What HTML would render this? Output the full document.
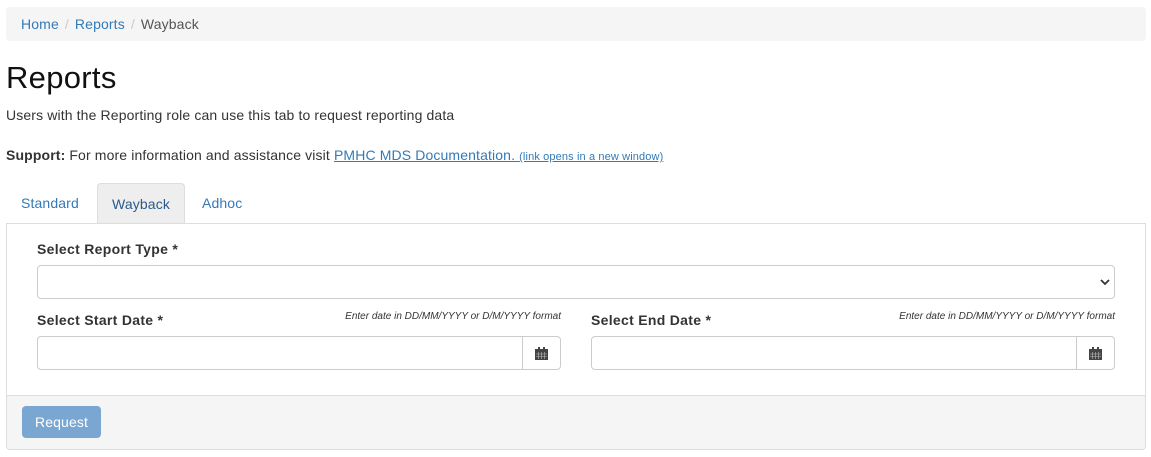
<!DOCTYPE html>
<html><head><style>
body{margin:0;font-family:"Liberation Sans",Arial,sans-serif;font-size:14px;color:#333;background:#fff;width:1151px;height:457px;overflow:hidden;position:relative;letter-spacing:0.13px}
.a{position:absolute}
a{color:#337ab7;text-decoration:none}
.bc{left:6px;top:7px;width:1140px;height:34px;background:#f5f5f5;border-radius:4px}
.sep{color:#ccc;padding:0 6px}
.in{border:1px solid #ccc;border-radius:4px;background:#fff;box-sizing:border-box}
.hint{font-size:10px;font-style:italic;color:#333;text-align:right;width:300px;letter-spacing:0}
.lbl{font-weight:bold;font-size:14px;letter-spacing:0.3px}
</style></head><body>
<div class="a bc"><div class="a" style="left:15px;top:9px"><a>Home</a><span class="sep">/</span><a>Reports</a><span class="sep">/</span><span style="color:#555">Wayback</span></div></div>
<div class="a" style="left:6px;top:60px;font-size:31px;color:#111;letter-spacing:0.3px">Reports</div>
<div class="a" style="left:6px;top:107px">Users with the Reporting role can use this tab to request reporting data</div>
<div class="a" style="left:6px;top:147px"><b>Support:</b> For more information and assistance visit <a style="text-decoration:underline">PMHC MDS Documentation. <span style="font-size:11px">(link opens in a new window)</span></a></div>
<div class="a" style="left:21px;top:195px"><a>Standard</a></div>
<div class="a" style="left:97px;top:183px;width:88px;height:41px;background:#eee;border:1px solid #ddd;border-bottom:none;border-radius:4px 4px 0 0;box-sizing:border-box;text-align:center;line-height:40px;color:#2a5a8a">Wayback</div>
<div class="a" style="left:202px;top:195px"><a>Adhoc</a></div>
<div class="a" style="left:6px;top:223px;width:1140px;height:227px;border:1px solid #ddd;box-sizing:border-box;border-radius:0 0 4px 4px;overflow:hidden">
<div class="a" style="left:0;top:171px;width:100%;height:56px;background:#f5f5f5;border-top:1px solid #ddd"></div>
</div>
<div class="a lbl" style="left:37px;top:241px">Select Report Type *</div>
<div class="a in" style="left:37px;top:265px;width:1078px;height:34px"><svg class="a" style="right:4px;top:12px" width="10" height="8" viewBox="0 0 10 8"><path d="M1 2l4 4 4-4" stroke="#333" stroke-width="1.8" fill="none"/></svg></div>
<div class="a lbl" style="left:37px;top:312px">Select Start Date *</div>
<div class="a hint" style="left:261px;top:311px">Enter date in DD/MM/YYYY or D/M/YYYY format</div>
<div class="a in" style="left:37px;top:336px;width:486px;height:34px;border-radius:4px 0 0 4px"></div>
<div class="a in" style="left:522px;top:336px;width:39px;height:34px;border-radius:0 4px 4px 0"><svg class="a" style="left:12px;top:10px" width="13" height="13" viewBox="0 0 13 13"><rect x="0" y="2" width="13" height="11" fill="#444"/><rect x="3" y="0" width="2" height="3" fill="#444"/><rect x="8" y="0" width="2" height="3" fill="#444"/><path d="M1 7h11M1 9.5h11M3.5 5v7M6.5 5v7M9.5 5v7" stroke="#bbb" stroke-width=".6"/></svg></div>
<div class="a lbl" style="left:591px;top:312px">Select End Date *</div>
<div class="a hint" style="left:815px;top:311px">Enter date in DD/MM/YYYY or D/M/YYYY format</div>
<div class="a in" style="left:591px;top:336px;width:486px;height:34px;border-radius:4px 0 0 4px"></div>
<div class="a in" style="left:1076px;top:336px;width:39px;height:34px;border-radius:0 4px 4px 0"><svg class="a" style="left:12px;top:10px" width="13" height="13" viewBox="0 0 13 13"><rect x="0" y="2" width="13" height="11" fill="#444"/><rect x="3" y="0" width="2" height="3" fill="#444"/><rect x="8" y="0" width="2" height="3" fill="#444"/><path d="M1 7h11M1 9.5h11M3.5 5v7M6.5 5v7M9.5 5v7" stroke="#bbb" stroke-width=".6"/></svg></div>
<div class="a" style="left:22px;top:406px;width:79px;height:32px;background:#7aa6d2;border-radius:4px;color:#fff;text-align:center;line-height:32px">Request</div>
</body></html>
